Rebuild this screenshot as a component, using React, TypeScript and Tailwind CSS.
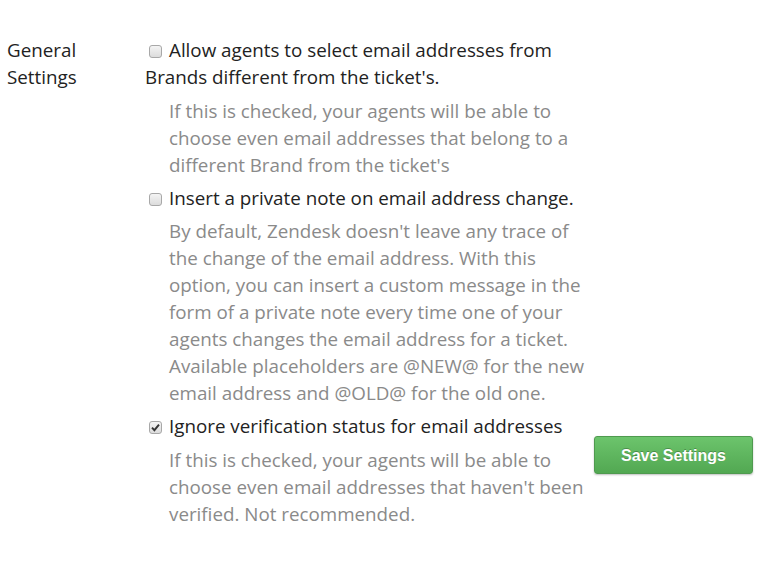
const font = { fontFamily: '"Open Sans", "Noto Sans", sans-serif' };

type Option = { label: string; help: string; checked: boolean };

const options: Option[] = [
  {
    label: "Allow agents to select email addresses from Brands different from the ticket's.",
    help: "If this is checked, your agents will be able to choose even email addresses that belong to a different Brand from the ticket's",
    checked: false,
  },
  {
    label: "Insert a private note on email address change.",
    help: "By default, Zendesk doesn't leave any trace of the change of the email address. With this option, you can insert a custom message in the form of a private note every time one of your agents changes the email address for a ticket. Available placeholders are @NEW@ for the new email address and @OLD@ for the old one.",
    checked: false,
  },
  {
    label: "Ignore verification status for email addresses",
    help: "If this is checked, your agents will be able to choose even email addresses that haven't been verified. Not recommended.",
    checked: true,
  },
];

const Box = ({ checked }: { checked: boolean }) => (
  <span className="relative inline-block w-[13px] h-[13px] mr-[7px] ml-[4px] align-[-1px] rounded-[3px] border border-[#a8a8a8] bg-gradient-to-b from-[#f4f4f4] to-[#dcdcdc]">
    {checked && (
      <svg viewBox="0 0 13 13" className="absolute -top-px -left-px w-[13px] h-[13px]">
        <path d="M3 6.6 L5.4 9.2 L10 3.6" fill="none" stroke="#333" strokeWidth="1.9" />
      </svg>
    )}
  </span>
);

export default function App() {
  return (
    <div className="flex bg-white min-h-[562px] pt-[37px] text-[18.8px] leading-[27px] text-[#222]" style={font}>
      <div className="w-[145px] pl-[7px] pr-[50px]">General Settings</div>
      <div className="w-[446px] flex flex-col gap-[6px]">
        {options.map((o, i) => (
          <div key={i} className="flex flex-col gap-[6.6px]">
            <label className="block">
              <Box checked={o.checked} />
              {o.label}
            </label>
            <p className="pl-[24px] text-[#8a8a8a]">{o.help}</p>
          </div>
        ))}
      </div>
      <div className="self-start mt-[399px] ml-[3px]">
        <button
          className="w-[159px] h-[38px] rounded-[3px] border border-[#4f9a4f] bg-gradient-to-b from-[#6cc46c] to-[#52a852] text-white font-bold text-[16px] shadow-[0_1px_2px_rgba(0,0,0,0.25)] [text-shadow:0_-1px_0_rgba(0,0,0,0.25)]"
          style={{ fontFamily: '"Liberation Sans", Arial, sans-serif' }}
        >
          Save Settings
        </button>
      </div>
    </div>
  );
}
